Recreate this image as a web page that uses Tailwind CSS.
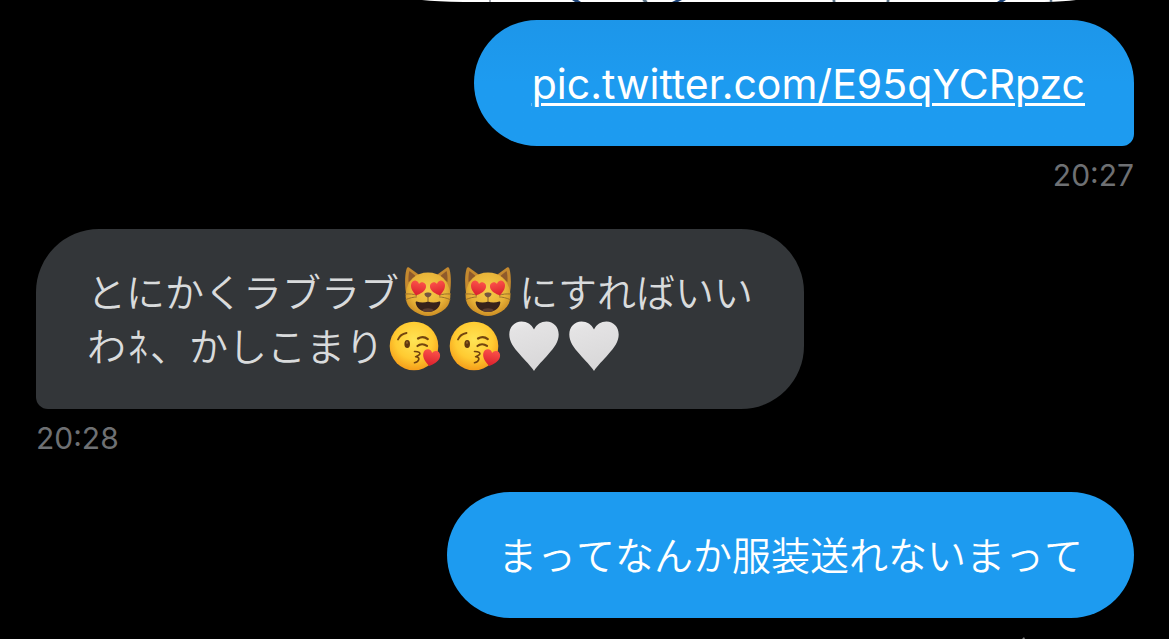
<!DOCTYPE html>
<html lang="ja">
<head>
    <meta charset="UTF-8">
    <meta name="viewport" content="width=device-width, initial-scale=1.0">
    <title>メッセージ</title>
    <script src="https://cdn.jsdelivr.net/npm/@tailwindcss/browser@4"></script>
</head>
<body class="bg-black h-screen overflow-hidden font-['Inter','Noto_Sans_CJK_JP',sans-serif]">

<!-- shared emoji artwork -->
<svg width="0" height="0" class="absolute" aria-hidden="true">
    <defs>
        <linearGradient id="heart-red" x1="0" y1="0" x2="0" y2="1">
            <stop offset="0" stop-color="#fb5149"/>
            <stop offset="1" stop-color="#d91f2c"/>
        </linearGradient>
        <radialGradient id="cat-fur" cx=".5" cy=".4" r=".62">
            <stop offset="0" stop-color="#f6cd48"/>
            <stop offset=".65" stop-color="#e8b338"/>
            <stop offset="1" stop-color="#c98a22"/>
        </radialGradient>
        <radialGradient id="face-yellow" cx=".5" cy=".38" r=".64">
            <stop offset="0" stop-color="#ffe455"/>
            <stop offset=".6" stop-color="#ffcb32"/>
            <stop offset="1" stop-color="#f59a18"/>
        </radialGradient>
        <linearGradient id="heart-white" x1="0" y1="0" x2=".3" y2="1">
            <stop offset="0" stop-color="#f1f0f1"/>
            <stop offset=".2" stop-color="#e4e3e4"/>
            <stop offset="1" stop-color="#d9d8d9"/>
        </linearGradient>
        <symbol id="small-heart" viewBox="0 0 16 16">
            <path d="M8 15.3C4.5 12.8.4 9.5.4 5.2.4 2.7 2.2.9 4.2.9 6 .9 7.3 1.8 8 3.4 8.7 1.8 10 .9 11.8.9c2 0 3.8 1.8 3.8 4.3 0 4.300-4.100 7.600-7.600 10.100z" fill="url(#heart-red)"/>
        </symbol>
        <symbol id="cat" viewBox="1 -3 60 54">
            <path d="M8 27C6.500 18 7 6 9 1.800c.4-.8 1.200-.8 2-.3L22 9.500h16L49 1.500c.8-.5 1.600-.5 2 .3C53 6 53.500 18 52 27z" fill="#c4892f"/>
            <path d="M10.500 16c-.2-5 .2-9 1-11L19 11zM49.500 16c.2-5-.2-9-1-11L41 11z" fill="#8f5a2b"/>
            <path d="M30 6.500C42 6.500 51 14 52.300 28c.6 8.500-3 14-8.800 17.500-4 2.400-9 4.500-13.500 4.500s-9.500-2.100-13.500-4.500C10.700 42 7.100 36.500 7.700 28 9 14 18 6.500 30 6.500z" fill="url(#cat-fur)"/>
            <path d="M7.500 28c4-.3 8 0 11 1.200M8 33.500c4-1.700 7.500-2.400 10.500-2.600M52.500 28c-4-.3-8 0-11 1.200M52 33.500c-4-1.700-7.500-2.400-10.500-2.600" stroke="#9a702c" stroke-width="1" fill="none" stroke-linecap="round"/>
            <path d="M18.700 35.500c3.500 1.300 8.300 1.300 11.300.1 3 1.200 7.800 1.200 11.300-.1 1 0 1.200.6 1 1.500C41.200 42.500 36.500 46 30 46s-11.200-3.500-12.300-9c-.2-.9 0-1.500 1-1.500z" fill="#37221b"/>
            <path d="M24 44.500c1.500-3 10.500-3 12 0-1.800 1-3.800 1.500-6 1.500s-4.200-.5-6-1.500z" fill="#5b3d30"/>
            <path d="M26.600 27.500c1.500-1.200 5.300-1.200 6.800 0 .8 1-1.700 4-3.400 4s-4.200-3-3.400-4z" fill="#765640"/>
            <path d="M30 31v4.500" stroke="#8a6030" stroke-width="1"/>
            <use href="#small-heart" x="12" y="14" width="16" height="17" transform="rotate(14 20 22)"/>
            <use href="#small-heart" x="32" y="14" width="16" height="17" transform="rotate(-14 40 22)"/>
        </symbol>
        <symbol id="kiss" viewBox="0 -2 60 54">
            <circle cx="30" cy="27" r="24.300" fill="url(#face-yellow)"/>
            <path d="M14 20.500c1.500-3.500 4.500-5.800 8.500-6.500" stroke="#73450f" stroke-width="1.900" fill="none" stroke-linecap="round"/>
            <ellipse cx="23.200" cy="25" rx="2.800" ry="4" fill="#62390f"/>
            <ellipse cx="23" cy="23.600" rx="1" ry="1.400" fill="#926126"/>
            <path d="M34 19.500c3-1.900 7-1.700 9.800.6M33.500 27c2.500-2.200 6.500-2.200 9.500-.2" stroke="#73450f" stroke-width="2.200" fill="none" stroke-linecap="round"/>
            <path d="M30.500 32.500c4.500-.1 6.200 1.300 5 3-.8 1.100-2.700 1.700-3.900 2.200 2 .2 3.700 1 3.200 2.700-.5 1.700-2 2.800-4.300 3.400" stroke="#73450f" stroke-width="1.600" fill="none" stroke-linecap="round" stroke-linejoin="round"/>
            <use href="#small-heart" x="38" y="30" width="18" height="18" transform="rotate(12 47 39)"/>
        </symbol>
        <symbol id="white-heart" viewBox="0 -2 60 54">
            <path d="M30 52C27 47 21 41.500 15.500 35 9.500 28.500 5.300 22.500 5.300 15.500 5.300 8 10.500 2.500 17.500 2.500c5.500 0 10 2.800 12.500 8 2.500-5.200 7-8 12.500-8 7 0 12.200 5.500 12.200 13 0 7-4.200 13-10.200 19.500C39 41.500 33 47 30 52z" fill="url(#heart-white)"/>
        </symbol>
    </defs>
</svg>

<main class="flex flex-col pl-9 pr-[35px]">
    <!-- bottom edge of the shared image -->
    <svg class="self-end" width="770" height="2" viewBox="0 0 770 2" role="img" aria-label="画像">
        <path d="M58 0H712Q700 1.500 680 2H100Q72 1.500 58 0z" fill="#fff"/>
        <path d="M126 0v2" stroke="#8a8f98" stroke-width="1.500"/>
        <path d="M208 0h6l3 2h-6zM312 0h6l-4 2h-6zM636 0h6l-3 2h-6z" fill="#1d4377"/>
        <path d="M279 0l4 2M469 0l2 2M525 0l-2 2M687 0v2" stroke="#5c7488" stroke-width="2.500"/>
    </svg>

    <section class="mt-[18px] flex flex-col items-end">
        <div class="rounded-[63px] rounded-br-xl bg-linear-to-b from-[#1d96e9] to-[#1d9bf0] to-50% pt-[37px] pb-[35px] pl-[58px] pr-[49px]">
            <a href="https://pic.twitter.com/E95qYCRpzc" class="block text-[41px] leading-[54px] text-white underline decoration-3 underline-offset-4">pic.twitter.com/E95qYCRpzc</a>
        </div>
        <time datetime="20:27" class="mt-2 text-[30px] leading-[42px] text-[#6e7073]">20:27</time>
    </section>

    <section class="mt-[33px] flex flex-col items-start">
        <div class="rounded-[63px] rounded-bl-xl bg-[#333639] px-[51px] pt-[34px] pb-[38px] text-[39px] leading-[54px] font-[350] [font-kerning:none] text-[#d9dbdc] font-['Noto_Sans_CJK_JP',sans-serif]">
            <p class="flex items-center">とにかくラブラブ<svg class="h-[54px] w-[60px]" role="img" aria-label="😻"><use href="#cat"/></svg><svg class="h-[54px] w-[60px]" role="img" aria-label="😻"><use href="#cat"/></svg>にすればいい</p>
            <p class="flex items-center">わ<span class="w-6 text-center">ﾈ</span>、かしこまり<svg class="h-[54px] w-[60px]" role="img" aria-label="😘"><use href="#kiss"/></svg><svg class="h-[54px] w-[60px]" role="img" aria-label="😘"><use href="#kiss"/></svg><svg class="h-[54px] w-[60px]" role="img" aria-label="🤍"><use href="#white-heart"/></svg><svg class="h-[54px] w-[60px]" role="img" aria-label="🤍"><use href="#white-heart"/></svg></p>
        </div>
        <time datetime="20:28" class="mt-2 text-[30px] leading-[42px] text-[#6e7073]">20:28</time>
    </section>

    <section class="mt-[33px] flex flex-col items-end">
        <div class="rounded-[63px] bg-[#1d9bf0] px-[51px] pt-[34px] pb-[38px] text-[39px] leading-[54px] font-[350] [font-kerning:none] text-white font-['Noto_Sans_CJK_JP',sans-serif]">
            <p>まってなんか服装送れないまって</p>
        </div>
        <!-- top of the next status row -->
        <svg class="mt-[18px] mr-[108px]" width="4" height="3" viewBox="0 0 4 3" aria-hidden="true">
            <path d="M0 3L2 1l1 2z" fill="#777"/>
        </svg>
    </section>
</main>
</body>
</html>
